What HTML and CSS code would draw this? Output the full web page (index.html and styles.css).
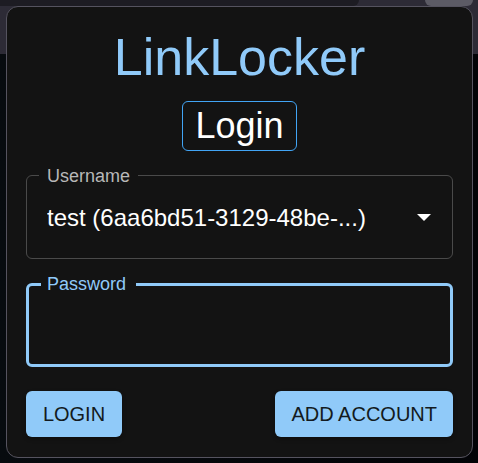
FILE: index.html
```html
<!DOCTYPE html>
<html lang="en">
<head>
<meta charset="utf-8">
<meta name="viewport" content="width=device-width, initial-scale=1">
<title>LinkLocker</title>
<link rel="stylesheet" href="styles.css">
</head>
<body>
<div class="toolbar" aria-hidden="true">
  <div class="toolbar-address"></div>
  <div class="toolbar-button"></div>
</div>
<main class="popup">
  <header class="heading">
    <h1 class="title">LinkLocker</h1>
    <h2 class="subtitle">Login</h2>
  </header>
  <form class="form">
    <div class="field">
      <label class="field-label" for="username">Username</label>
      <select class="field-control" id="username">
        <option>test (6aa6bd51-3129-48be-...)</option>
      </select>
      <svg class="field-arrow" viewBox="0 0 14 7" aria-hidden="true"><path d="M0 0h14L7 7z"/></svg>
    </div>
    <div class="field field-active">
      <label class="field-label" for="password">Password</label>
      <input class="field-control" id="password" type="password">
    </div>
    <div class="actions">
      <button class="button" type="submit">LOGIN</button>
      <button class="button" type="button">ADD ACCOUNT</button>
    </div>
  </form>
</main>
</body>
</html>
```
FILE: styles.css
```css
* {
  box-sizing: border-box;
}

body {
  margin: 0;
  padding: 6px 5px 5px 6px;
  min-height: 100vh;
  background: linear-gradient(90deg, #070b0f, #020306);
  color: #fff;
  font-family: "Liberation Sans", Arial, sans-serif;
}

/* Browser toolbar behind the popup */
.toolbar {
  position: absolute;
  z-index: -1;
  top: 0;
  left: 0;
  right: 0;
  height: 54px;
  display: flex;
  justify-content: space-between;
  padding-right: 5px;
  background: #2d2b36;
}

.toolbar-address {
  width: 76%;
  height: 6px;
  background: #1d1c23;
  border-bottom-right-radius: 6px;
}

.toolbar-button {
  width: 48px;
  height: 6px;
  background: #5c5b65;
  border-radius: 0 0 6px 6px;
}

.popup {
  padding: 18px 19px 20px;
  background: #131313;
  border: 1px solid #55535f;
  border-radius: 12px;
}

.heading {
  display: flex;
  flex-direction: column;
  align-items: center;
  gap: 12px;
  margin-bottom: 24px;
}

.title {
  margin: 0;
  color: #90caf9;
  font-size: 52px;
  font-weight: 400;
  line-height: 64px;
}

.subtitle {
  margin: 0;
  padding: 0 12px;
  border: 1px solid #42a5f5;
  border-radius: 6px;
  font-size: 36px;
  font-weight: 400;
  line-height: 48px;
}

.form {
  display: flex;
  flex-direction: column;
  gap: 24px;
}

.field {
  position: relative;
  height: 84px;
  border: 1px solid #4a4a4a;
  border-radius: 6px;
}

.field-active {
  border: 3px solid #90caf9;
}

.field-label {
  position: absolute;
  top: -10px;
  left: 12px;
  padding: 0 8px;
  background: #131313;
  color: #b8b8b8;
  font-size: 18px;
  line-height: 20px;
}

.field-active .field-label {
  top: -12px;
  padding: 0 10px 0 6px;
  color: #90caf9;
}

.field-control {
  display: block;
  width: 100%;
  height: 100%;
  padding: 0 20px;
  appearance: none;
  background: transparent;
  border: 0;
  outline: 0;
  color: #fff;
  font: inherit;
  font-size: 24px;
}

.field-arrow {
  position: absolute;
  top: 38px;
  right: 21px;
  width: 14px;
  height: 7px;
  fill: #fff;
  pointer-events: none;
}

.actions {
  display: flex;
  justify-content: space-between;
}

.button {
  min-width: 96px;
  height: 46px;
  padding: 0 16px;
  background: #90caf9;
  border: 0;
  border-radius: 6px;
  box-shadow: 0 2px 4px rgba(0, 0, 0, 0.3);
  color: #131a20;
  font: inherit;
  font-size: 20px;
}
```
